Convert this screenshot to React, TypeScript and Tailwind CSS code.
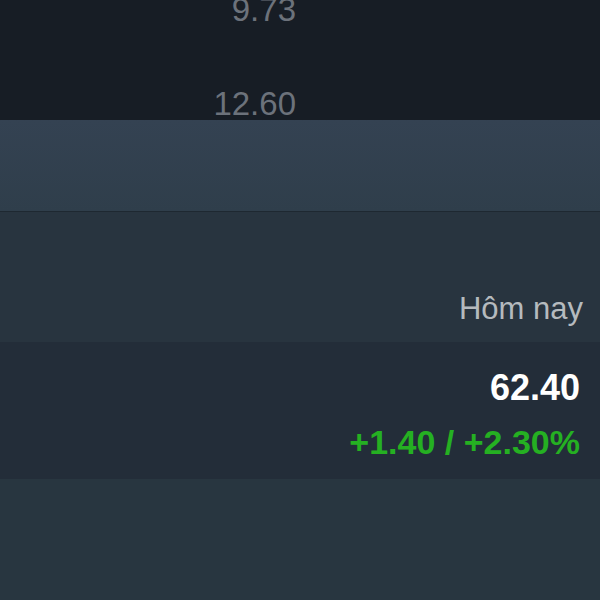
import React from "react"

const prices = ["9.73", "12.60"]

export default function App() {
    return (
        <div className="flex flex-col w-[600px] h-[600px] overflow-hidden bg-[#283540]" style={{ fontFamily: '"Liberation Sans", Arial, sans-serif' }}>
            <div className="h-[120px] bg-[#171d25] flex flex-col">
                {prices.map((p, i) => (
                    <div key={p} className={`w-[300px] pr-1 text-right text-[33px] leading-none text-[#6c727b] ${i === 0 ? "-mt-[7px]" : "mt-[61px]"}`}>
                        {p}
                    </div>
                ))}
            </div>
            <div className="h-[92px] bg-gradient-to-b from-[#344252] to-[#2f3e4b] border-b border-[#1e2831]" />
            <div className="h-[130px] bg-[#28343f] flex items-end justify-end pr-[17px] pb-[18px]">
                <span className="text-[31px] leading-none text-[#b5babe]">Hôm nay</span>
            </div>
            <div className="h-[137px] bg-[#232d39] flex flex-col items-end pr-[20px] pt-[28px]">
                <span className="text-[36px] leading-none font-bold text-white">62.40</span>
                <span className="mt-[19px] text-[34px] leading-none font-bold text-[#25b022]">+1.40 / +2.30%</span>
            </div>
            <div className="flex-1 bg-[#283640]" />
        </div>
    )
}
